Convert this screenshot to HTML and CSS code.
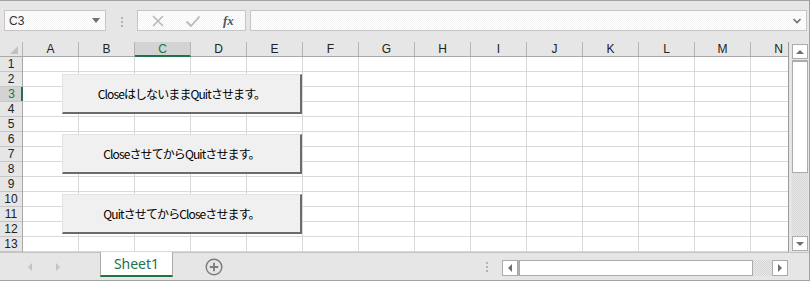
FILE: index.html
```html
<!DOCTYPE html>
<html lang="ja">

<head>
  <meta charset="UTF-8">
  <title>Book1 - Excel</title>
  <link rel="stylesheet" href="styles.css">
</head>

<body>
  <div class="app">

    <div class="formula-bar">
      <div class="name-box">
        <span>C3</span>
        <span class="drop"></span>
      </div>
      <div class="grip"><i></i><i></i><i></i></div>
      <div class="fx-box">
        <svg width="14" height="14" viewBox="0 0 14 14"><path d="M2 2 L12 12 M12 2 L2 12" stroke="#b9b9b9" stroke-width="1.6" fill="none"/></svg>
        <svg width="16" height="14" viewBox="0 0 16 14"><path d="M1.5 7.5 L6 12 L14.5 2.5" stroke="#b9b9b9" stroke-width="1.8" fill="none"/></svg>
        <span class="fx">fx</span>
      </div>
      <div class="formula-input">
        <svg width="10" height="8" viewBox="0 0 10 8"><path d="M1.5 2 L5 5.5 L8.5 2" stroke="#6f6f6f" stroke-width="1.6" fill="none"/></svg>
      </div>
    </div>

    <div class="workspace">
      <div class="sheet">
        <div class="col-heads">
          <div class="corner"><span class="corner-tri"></span></div>
          <div class="col-head">A</div>
          <div class="col-head">B</div>
          <div class="col-head selected">C</div>
          <div class="col-head">D</div>
          <div class="col-head">E</div>
          <div class="col-head">F</div>
          <div class="col-head">G</div>
          <div class="col-head">H</div>
          <div class="col-head">I</div>
          <div class="col-head">J</div>
          <div class="col-head">K</div>
          <div class="col-head">L</div>
          <div class="col-head">M</div>
          <div class="col-head">N</div>
        </div>
        <div class="body">
          <div class="row-heads">
            <div class="row-head">1</div>
            <div class="row-head">2</div>
            <div class="row-head selected">3</div>
            <div class="row-head">4</div>
            <div class="row-head">5</div>
            <div class="row-head">6</div>
            <div class="row-head">7</div>
            <div class="row-head">8</div>
            <div class="row-head">9</div>
            <div class="row-head">10</div>
            <div class="row-head">11</div>
            <div class="row-head">12</div>
            <div class="row-head">13</div>
          </div>
          <div class="cells">
            <button class="macro-btn btn-1">CloseはしないままQuitさせます。</button>
            <button class="macro-btn btn-2">CloseさせてからQuitさせます。</button>
            <button class="macro-btn btn-3">QuitさせてからCloseさせます。</button>
          </div>
        </div>
      </div>

      <div class="vscroll">
        <div class="sb-btn"><span class="tri up"></span></div>
        <div class="vthumb"></div>
        <div class="track"></div>
        <div class="sb-btn"><span class="tri down"></span></div>
      </div>
    </div>

    <div class="tab-bar">
      <div class="tab-nav">
        <span class="tri left light"></span>
        <span class="tri right light"></span>
      </div>
      <div class="tab">Sheet1</div>
      <div class="add-sheet">
        <svg width="18" height="18" viewBox="0 0 18 18">
          <circle cx="9" cy="9" r="7.8" stroke="#7b7b7b" stroke-width="1.4" fill="none"/>
          <path d="M9 4.8 V13.2 M4.8 9 H13.2" stroke="#7b7b7b" stroke-width="1.8"/>
        </svg>
      </div>
      <div class="spacer"></div>
      <div class="grip"><i></i><i></i><i></i></div>
      <div class="hscroll">
        <div class="sb-btn"><span class="tri left"></span></div>
        <div class="hthumb"></div>
        <div class="track"></div>
        <div class="sb-btn"><span class="tri right"></span></div>
      </div>
    </div>

  </div>
</body>

</html>
```

FILE: styles.css
```css
body {
  margin: 0;
  background: #e6e6e6;
}

.app {
  width: 810px;
  height: 281px;
  box-sizing: border-box;
  border: 1px solid #a3a3a3;
  border-left: none;
  background: #e6e6e6;
  display: flex;
  flex-direction: column;
  overflow: hidden;
  font-family: "Liberation Sans", Arial, sans-serif;
  color: #222;
}

/* formula bar */

.formula-bar {
  height: 41px;
  display: flex;
  align-items: flex-start;
  padding-left: 4px;
  flex-shrink: 0;
}

.name-box,
.fx-box,
.formula-input {
  margin-top: 9px;
  height: 21px;
  box-sizing: border-box;
  border: 1px solid #c6c6c6;
  background: repeating-conic-gradient(#ffffff 0 25%, #f4f4f4 0 50%) 0 0 / 2px 2px;
  display: flex;
  align-items: center;
}

.name-box {
  width: 102px;
  padding: 0 5px 0 4px;
  justify-content: space-between;
  font-size: 12px;
  color: #333;
}

.drop {
  width: 0;
  height: 0;
  border-left: 4px solid transparent;
  border-right: 4px solid transparent;
  border-top: 5px solid #6f6f6f;
}

.grip {
  width: 2px;
  display: flex;
  flex-direction: column;
  gap: 2px;
}

.grip i {
  display: block;
  width: 2px;
  height: 2px;
  background: #b3b3b3;
}

.formula-bar .grip {
  margin: 16px 14px 0 15px;
}

.fx-box {
  width: 109px;
  padding-left: 13px;
  gap: 20px;
}

.fx {
  font-family: "Liberation Serif", serif;
  font-style: italic;
  font-weight: bold;
  font-size: 13px;
  color: #555;
  margin-left: 2px;
}

.formula-input {
  width: 557px;
  margin-left: 4px;
  justify-content: flex-end;
  padding-right: 4px;
}

/* sheet */

.workspace {
  height: 210px;
  display: flex;
  flex-shrink: 0;
}

.sheet {
  width: 789px;
  box-sizing: border-box;
  border-right: 1px solid #9b9b9b;
  display: flex;
  flex-direction: column;
  overflow: hidden;
}

.col-heads {
  height: 15px;
  display: flex;
  flex-shrink: 0;
  border-bottom: 1px solid #a8a8a8;
  box-sizing: border-box;
}

.corner {
  width: 23px;
  flex-shrink: 0;
  box-sizing: border-box;
  border-right: 1px solid #b5b5b5;
  position: relative;
}

.corner-tri {
  position: absolute;
  right: 4px;
  bottom: 2px;
  width: 0;
  height: 0;
  border-left: 8px solid transparent;
  border-bottom: 8px solid #c1c1c1;
}

.col-head {
  width: 56px;
  flex-shrink: 0;
  box-sizing: border-box;
  border-right: 1px solid #b5b5b5;
  text-align: center;
  font-size: 12px;
  line-height: 15px;
  color: #222;
}

.col-head.selected {
  background: #d3d3d3;
  color: #217346;
  border-bottom: 2px solid #217346;
  margin-bottom: -1px;
  line-height: 14px;
}

.body {
  display: flex;
  flex: 1;
}

.row-heads {
  width: 23px;
  flex-shrink: 0;
  box-sizing: border-box;
  border-right: 1px solid #a8a8a8;
}

.row-head {
  height: 15px;
  box-sizing: border-box;
  border-bottom: 1px solid #c6c6c6;
  text-align: center;
  font-size: 12px;
  line-height: 15px;
  color: #222;
}

.row-head.selected {
  background: #d3d3d3;
  color: #217346;
  box-shadow: inset -2px 0 0 #217346;
  margin-right: -1px;
}

.cells {
  flex: 1;
  position: relative;
  background-color: #fff;
  background-image:
    repeating-linear-gradient(to right, transparent 0 55px, #d9d9d9 55px 56px),
    repeating-linear-gradient(to bottom, transparent 0 14px, #d9d9d9 14px 15px);
}

.macro-btn {
  position: absolute;
  left: 39px;
  width: 240px;
  height: 40px;
  box-sizing: border-box;
  margin: 0;
  padding: 0;
  background: #f0f0f0;
  border: none;
  border-top: 1px solid #e3e3e3;
  border-left: 1px solid #e3e3e3;
  border-right: 2px solid #6b6b6b;
  border-bottom: 2px solid #6b6b6b;
  font-family: "Noto Sans CJK JP", sans-serif;
  font-size: 12px;
  letter-spacing: -0.9px;
  color: #000;
}

.btn-1 { top: 17px; }
.btn-2 { top: 77px; }
.btn-3 { top: 137px; }

/* scroll bars */

.vscroll {
  width: 20px;
  box-sizing: border-box;
  padding: 2px 1px 1px 3px;
  display: flex;
  flex-direction: column;
}

.sb-btn {
  width: 16px;
  height: 15px;
  box-sizing: border-box;
  border: 1px solid #ababab;
  background: #fff;
  display: flex;
  align-items: center;
  justify-content: center;
  flex-shrink: 0;
}

.vthumb {
  height: 113px;
  box-sizing: border-box;
  border: 1px solid #ababab;
  border-top-width: 2px;
  background: #fff;
  margin-top: 1px;
}

.track {
  flex: 1;
  background: repeating-conic-gradient(#d6d6d6 0 25%, #e8e8e8 0 50%) 0 0 / 2px 2px;
}

.tri {
  width: 0;
  height: 0;
  display: block;
}

.tri.up {
  border-left: 4px solid transparent;
  border-right: 4px solid transparent;
  border-bottom: 4px solid #6f6f6f;
}

.tri.down {
  border-left: 4px solid transparent;
  border-right: 4px solid transparent;
  border-top: 4px solid #6f6f6f;
}

.tri.left {
  border-top: 4px solid transparent;
  border-bottom: 4px solid transparent;
  border-right: 4px solid #6f6f6f;
}

.tri.right {
  border-top: 4px solid transparent;
  border-bottom: 4px solid transparent;
  border-left: 4px solid #6f6f6f;
}

.tri.left.light {
  border-right-color: #c2c2c2;
}

.tri.right.light {
  border-left-color: #c2c2c2;
}

/* sheet tabs */

.tab-bar {
  flex: 1;
  border-top: 1px solid #c3c3c3;
  display: flex;
  align-items: flex-start;
}

.tab-nav {
  width: 100px;
  display: flex;
  gap: 24px;
  padding: 10px 0 0 28px;
  box-sizing: border-box;
}

.tab {
  width: 73px;
  height: 25px;
  box-sizing: border-box;
  margin-top: -1px;
  background: #fff;
  border-left: 1px solid #ababab;
  border-right: 1px solid #ababab;
  border-bottom: 2px solid #217346;
  color: #217346;
  font-family: "Noto Sans", sans-serif;
  font-size: 14px;
  line-height: 23px;
  text-align: center;
}

.add-sheet {
  margin: 5px 0 0 32px;
  height: 18px;
}

.spacer {
  flex: 1;
}

.tab-bar .grip {
  margin: 9px 14px 0 0;
}

.hscroll {
  width: 286px;
  height: 16px;
  margin: 7px 21px 0 0;
  display: flex;
}

.hscroll .sb-btn {
  height: 16px;
}

.hthumb {
  width: 235px;
  box-sizing: border-box;
  border: 1px solid #ababab;
  border-left-width: 2px;
  background: #fff;
}
```
